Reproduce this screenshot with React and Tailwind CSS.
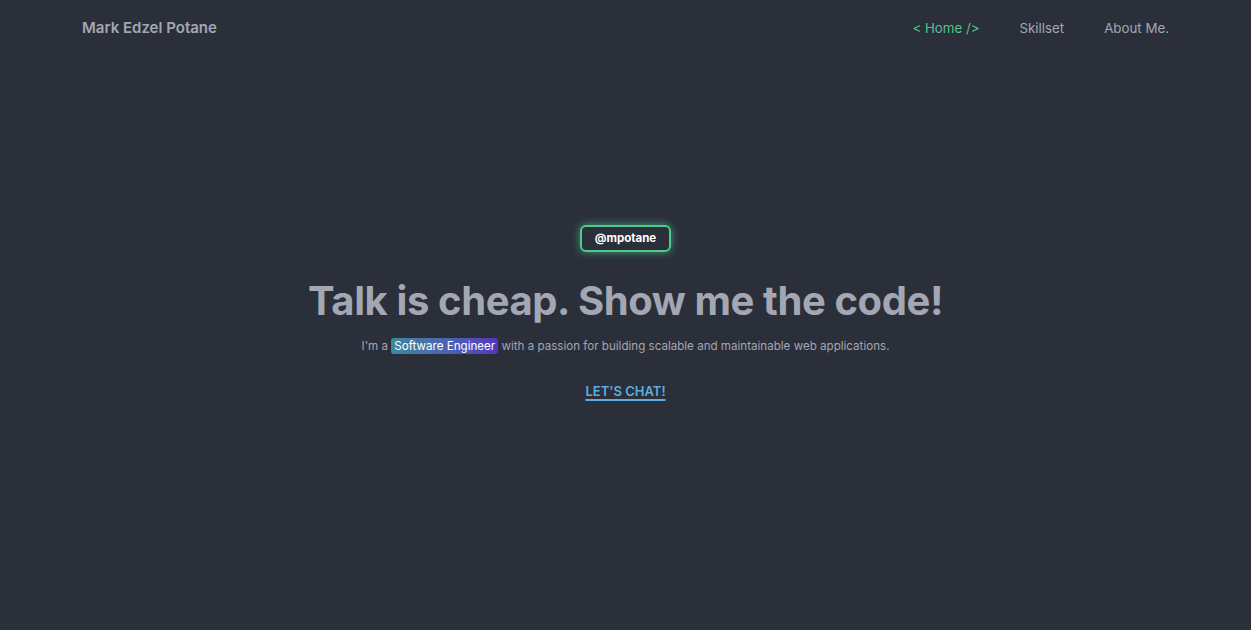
import React from "react";

const App = () => {
  return (
    <div
      className="min-h-screen bg-[#2b2f3a] flex flex-col"
      style={{ fontFamily: "Inter, 'Noto Sans', sans-serif" }}
    >
      {/* Navbar */}
      <nav className="flex items-center justify-between h-[57px] px-[82px]">
        <div className="text-[15px] font-semibold text-[#a3a7b3]">
          Mark Edzel Potane
        </div>
        <ul className="flex items-center gap-10 text-[13.3px] text-[#a3a7b3]">
          <li className="text-[#4fc48a]">&lt; Home /&gt;</li>
          <li>Skillset</li>
          <li>About Me.</li>
        </ul>
      </nav>

      {/* Hero */}
      <main className="flex flex-col items-center pt-[168px]">
        <div className="rounded-md border-2 border-[#4fc98e] bg-[#2b2f3a] px-[13px] py-[3px] text-[11.5px] font-bold text-white shadow-[0_0_8px_rgba(79,201,142,0.7)]">
          @mpotane
        </div>
        <h1 className="mt-[25px] text-[40px] font-bold tracking-[-0.01em] text-[#a3a7b3] leading-[1.2]">
          Talk is cheap. Show me the code!
        </h1>
        <p className="mt-[13px] text-[11.6px] text-[#a3a7b3]">
          I'm a{" "}
          <span className="rounded-[3px] bg-gradient-to-r from-[#3a8a9e] to-[#5532c0] px-[3px] py-[1px] text-white">
            Software Engineer
          </span>{" "}
          with a passion for building scalable and maintainable web
          applications.
        </p>
        <a
          href="#"
          className="mt-[26px] text-[13px] font-semibold text-[#5aaee0] underline underline-offset-[3px] decoration-2"
        >
          LET'S CHAT!
        </a>
      </main>
    </div>
  );
};

export default App;
